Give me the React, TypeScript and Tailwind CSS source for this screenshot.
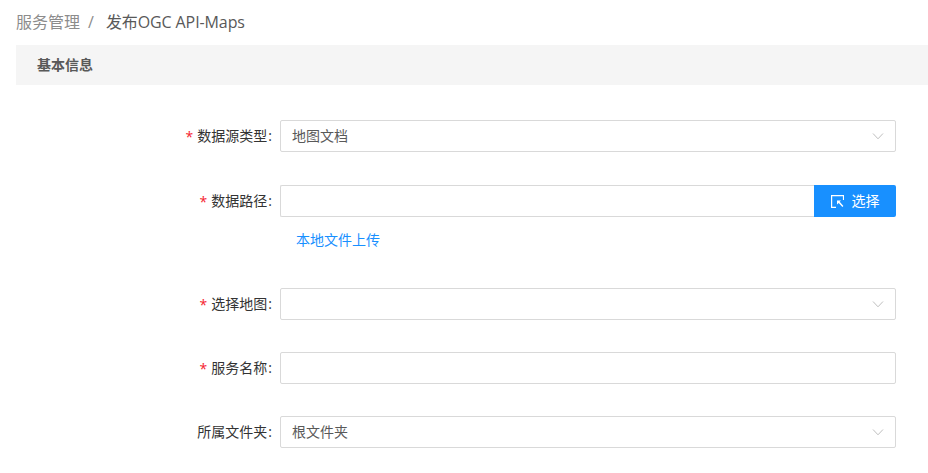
const fontStack = 'font-["Open_Sans","Noto_Sans_CJK_SC",sans-serif]'

const Chevron = () => (
  <svg width="12" height="12" viewBox="0 0 12 12" fill="none" className="shrink-0" aria-hidden="true">
    <path d="M1 3.5 L6 8.8 L11 3.5" stroke="#bfbfbf" strokeWidth="1" />
  </svg>
)

const SelectIcon = () => (
  <svg width="13" height="13" viewBox="0 0 13 13" fill="none" aria-hidden="true">
    <path d="M12.5 5 V0.6 H0.6 V12.4 H5" stroke="#fff" strokeWidth="1.2" />
    <path d="M6 5.5 H10 L8.7 6.8 L12.4 11 L11.4 12 L7.7 8 L6 9.6 Z" fill="#fff" />
  </svg>
)

const Label = ({ text, required }: { text: string; required?: boolean }) => (
  <label className="flex h-8 w-[280px] shrink-0 items-center justify-end pb-[2px] pr-[8px] text-[14px] text-[#333]">
    {required && <span className="mr-[4px] pt-[2px] text-[14px] text-[#f5222d]">*</span>}
    {text}
    <span className="ml-[1px]">:</span>
  </label>
)

const Select = ({ value }: { value?: string }) => (
  <div className="flex h-8 w-[616px] items-center justify-between rounded-[2px] border border-[#d9d9d9] bg-white pl-[11px] pr-[11px] text-[14px] text-[#595959]">
    <span className="pb-[2px]">{value}</span>
    <Chevron />
  </div>
)

export default function App() {
  return (
    <div className={`h-[473px] w-[928px] overflow-hidden bg-white pl-4 ${fontStack}`}>
      <div className="flex h-[45px] items-center pb-[2px] text-[16px] text-[#8c8c8c]">
        <span>服务管理</span>
        <span className="ml-[8px] mr-[12px]">/</span>
        <span className="tracking-[-0.1px] text-[#595959]">发布OGC API-Maps</span>
      </div>
      <div className="flex h-10 items-center bg-[#f5f5f5] pb-[2px] pl-[21px] text-[14px] font-bold text-[#595959]">基本信息</div>

      <form className="-ml-4 flex flex-col pt-[35px]">
        <div className="mb-[33px] flex">
          <Label text="数据源类型" required />
          <Select value="地图文档" />
        </div>

        <div className="mb-[71px] flex">
          <Label text="数据路径" required />
          <div className="relative w-[616px]">
            <div className="flex h-8">
              <div className="flex-1 rounded-l-[2px] border border-r-0 border-[#d9d9d9] bg-white" />
              <button
                type="button"
                className="flex w-[82px] items-center justify-center gap-[8px] rounded-r-[2px] bg-[#1890ff] text-[14px] text-white"
              >
                <SelectIcon />
                <span className="pb-[2px]">选择</span>
              </button>
            </div>
            <a className="absolute left-4 top-[44px] text-[14px] leading-[22px] text-[#1890ff]">本地文件上传</a>
          </div>
        </div>

        <div className="mb-8 flex">
          <Label text="选择地图" required />
          <Select />
        </div>

        <div className="mb-8 flex">
          <Label text="服务名称" required />
          <div className="h-8 w-[616px] rounded-[2px] border border-[#d9d9d9] bg-white" />
        </div>

        <div className="flex">
          <Label text="所属文件夹" />
          <Select value="根文件夹" />
        </div>
      </form>
    </div>
  )
}
